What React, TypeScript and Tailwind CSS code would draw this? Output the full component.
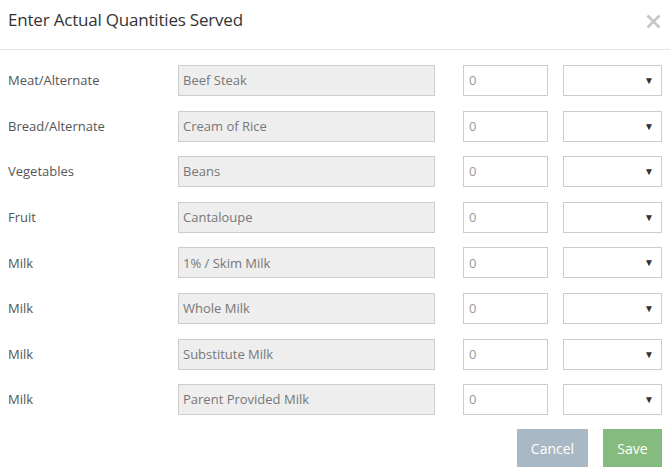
const rows = [
  { group: 'Meat/Alternate', item: 'Beef Steak' },
  { group: 'Bread/Alternate', item: 'Cream of Rice' },
  { group: 'Vegetables', item: 'Beans' },
  { group: 'Fruit', item: 'Cantaloupe' },
  { group: 'Milk', item: '1% / Skim Milk' },
  { group: 'Milk', item: 'Whole Milk' },
  { group: 'Milk', item: 'Substitute Milk' },
  { group: 'Milk', item: 'Parent Provided Milk' },
]

export default function App() {
  return (
    <div className="w-[670px] h-[475px] bg-white text-[#555] font-['Open_Sans',sans-serif] overflow-hidden">
      {/* Header */}
      <div className="h-[50px] border-b border-[#e5e5e5] flex items-start justify-between pl-[8px] pr-[8px]">
        <h2 className="text-[17px] leading-[24px] mt-[8px] text-[#333] tracking-[-0.2px]">Enter Actual Quantities Served</h2>
        <button className="mt-[14px] mr-[1px]">
          <svg width="15" height="15" viewBox="0 0 15 15">
            <path d="M1.5 1.5L13.5 13.5M13.5 1.5L1.5 13.5" stroke="#c6c6c6" strokeWidth="2.6" />
          </svg>
        </button>
      </div>

      {/* Rows */}
      <div className="flex flex-col gap-[14.6px] pt-[15px]">
        {rows.map((r, i) => (
          <div key={i} className="flex items-center h-[31px] text-[13px]">
            <div className="w-[178px] pl-[8px] pt-[1px]">{r.group}</div>
            <div className="w-[257px] h-[31px] bg-[#eeeeee] border border-[#cccccc] flex items-center pt-[1px] px-[4px] text-[#777]">
              {r.item}
            </div>
            <div className="ml-[28px] w-[85px] h-[31px] border border-[#cccccc] flex items-center pt-[1px] px-[5px] text-[#999]">
              0
            </div>
            <div className="ml-[15px] w-[99px] h-[31px] border border-[#cccccc] flex items-center justify-end pr-[7px]">
              <span className="text-[10px] text-[#333]">▼</span>
            </div>
          </div>
        ))}
      </div>

      {/* Footer */}
      <div className="flex justify-end gap-[15px] pr-[8px] mt-[14px]">
        <button className="w-[71px] h-[38px] bg-[#a8b8c4] text-white text-[14px]">Cancel</button>
        <button className="w-[59px] h-[38px] bg-[#85bb7e] text-white text-[14px]">Save</button>
      </div>
    </div>
  )
}
